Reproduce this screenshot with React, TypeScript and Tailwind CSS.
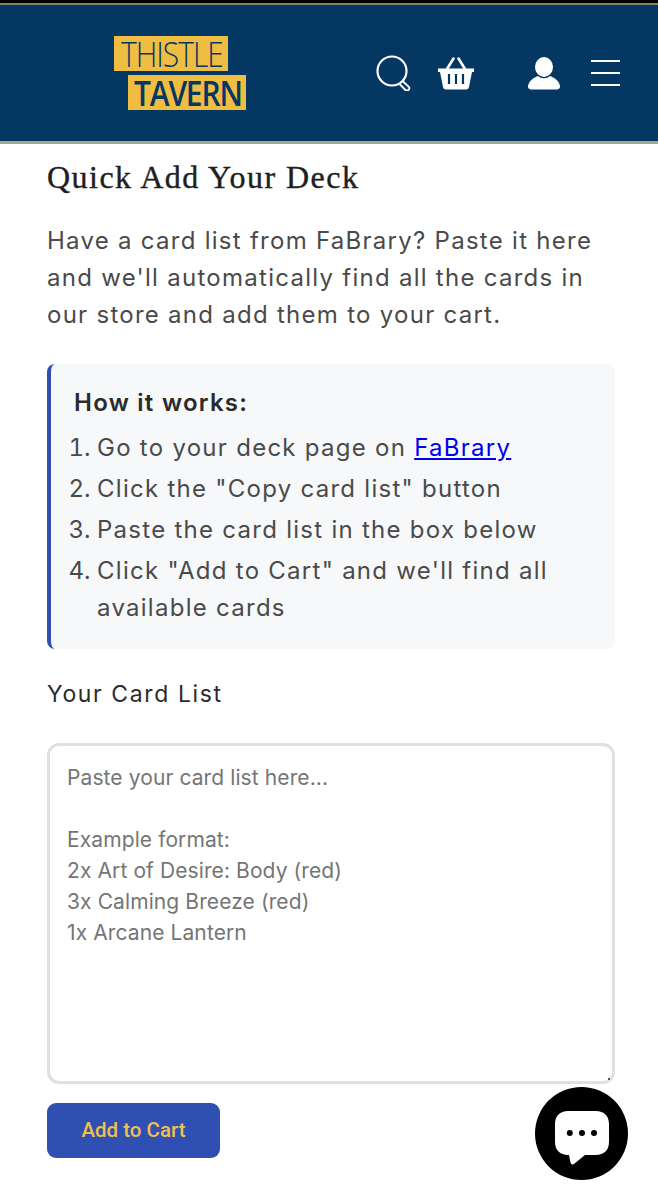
import React from 'react';

const body = { fontFamily: 'Inter, "Noto Sans", sans-serif' };

const steps = [
  <>Go to your deck page on <a href="#" className="text-[#0000ee] underline">FaBrary</a></>,
  <>Click the "Copy card list" button</>,
  <>Paste the card list in the box below</>,
  <>Click "Add to Cart" and we'll find all available cards</>,
];

const Header: React.FC = () => (
  <header className="bg-black pt-[3px]">
    <div className="h-[2px] bg-[#7d8460]"></div>
    <div className="h-[136px] bg-[#053763] flex items-center pl-[114px] pr-[38px]">
      {/* Logo */}
      <div className="w-[133px] flex flex-col" style={{ fontFamily: '"Open Sans", sans-serif' }}>
        <div className="w-[114px] h-[35px] flex items-center bg-[#f0bd43] text-[#053763] text-[30px] font-light pl-[7px] tracking-[-1px]">
          <span className="block leading-[28px] scale-y-[1.14]">THISTLE</span>
        </div>
        <div className="w-[118px] h-[35px] flex items-center ml-[14px] mt-[4px] bg-[#f0bd43] text-[#053763] text-[30px] font-semibold pl-[6px] tracking-[-1.2px]">
          <span className="block leading-[28px] scale-y-[1.14]">TAVERN</span>
        </div>
      </div>

      <div className="ml-auto flex items-center">
        {/* Search */}
        <svg width="36" height="36" viewBox="0 0 36 36" fill="none" stroke="white" className="mr-[26px]">
          <circle cx="16" cy="16" r="14.500" strokeWidth="2.200" />
          <path d="M27 26.500l6 5.500a2.400 2.400 0 0 1-3.600 3l-5.200-5.400" strokeWidth="2" strokeLinecap="round" />
        </svg>
        {/* Basket */}
        <svg width="36" height="34" viewBox="0 0 36 34" fill="white" className="mr-[54px]">
          <path d="M9 13L15.500 2.500M27 13L20.500 2.500" stroke="white" strokeWidth="2.600" strokeLinecap="round" fill="none" />
          <path d="M0 12.500h36v3.500h-2l-3 15a3 3 0 0 1-3 2.500H8a3 3 0 0 1-3-2.500L2 16H0z" />
          <path d="M11 18v10M18 18v10M25 18v10" stroke="#053763" strokeWidth="2.200" />
        </svg>
        {/* Account */}
        <svg width="32" height="33" viewBox="0 0 32 33" fill="white" className="mr-[31px]">
          <ellipse cx="16" cy="10" rx="9" ry="10" />
          <path d="M0 29c1-6 7-9 10-10 3 3 9 3 12 0 3 1 9 4 10 10 .3 2-1 3.500-3 3.500H3c-2 0-3.300-1.500-3-3.500z" />
        </svg>
        {/* Menu */}
        <div className="w-[29px] flex flex-col gap-[10px]">
          <div className="h-[2px] bg-white"></div>
          <div className="h-[2px] bg-white"></div>
          <div className="h-[2px] bg-white"></div>
        </div>
      </div>
    </div>
    <div className="h-[3px] bg-[#a3a98a]"></div>
  </header>
);

const App: React.FC = () => {
  return (
    <div className="relative min-h-[1200px] bg-white overflow-hidden">
      <Header />
      <main className="pl-[47px] pr-[43px] text-[#4a4a4a]" style={body}>
        <h1 className="mt-[13px] text-[32px] leading-[40px] tracking-[1.47px] text-[#1f1f1f] font-medium [-webkit-text-stroke:0.4px_#1f1f1f]" style={{ fontFamily: '"Liberation Serif", serif' }}>
          Quick Add Your Deck
        </h1>
        <p className="mt-[25px] text-[24px] leading-[37px] tracking-[1.27px]">
          Have a card list from FaBrary? Paste it here and we'll automatically find all the cards in our store and add them to your cart.
        </p>

        {/* How it works */}
        <section className="mt-[31px] h-[285px] bg-[#f7f8fa] border-l-[4px] border-[#304fb3] rounded-[8px] pl-[23px] pr-[20px] pt-[20px]">
          <h3 className="text-[24px] leading-[37px] tracking-[1.25px] font-semibold text-[#2b2b2b]">How it works:</h3>
          <ol className="mt-[8px] list-decimal pl-[23px] flex flex-col gap-[4px] text-[24px] leading-[37px] tracking-[1.27px] marker:tracking-normal">
            {steps.map((step, i) => (
              <li key={i}>{step}</li>
            ))}
          </ol>
        </section>

        <label className="block mt-[27px] text-[23px] leading-[37px] tracking-[1.6px] text-[#2b2b2b]">Your Card List</label>

        <div className="relative mt-[30px]">
          <textarea
            className="block w-full h-[341px] resize-none border-[3px] border-[#e0e0e0] rounded-[12px] px-[17px] pt-[16px] pb-[16px] text-[21px] leading-[31px] tracking-[0.1px] outline-none placeholder:text-[#757575]"
            placeholder={"Paste your card list here...\n\nExample format:\n2x Art of Desire: Body (red)\n3x Calming Breeze (red)\n1x Arcane Lantern"}
          />
          {/* resize grip */}
          <div className="absolute right-[5px] bottom-[4px] w-[2px] h-[2px] bg-[#555555]"></div>
        </div>

        <button className="mt-[19px] w-[173px] h-[55px] bg-[#304fb3] rounded-[9px] text-[#efc14c] text-[20.5px] font-medium" style={{ fontFamily: 'Roboto, sans-serif' }}>
          Add to Cart
        </button>
      </main>

      {/* Chat launcher */}
      <div className="absolute left-[535px] top-[1087px] w-[93px] h-[93px] rounded-full bg-black flex items-center justify-center">
        <svg width="54" height="54" viewBox="0 0 54 54" className="mt-[9px]">
          <path d="M13 0h28c8 0 13 5 13 13v18c0 8-5 13-13 13H30L19 53c-1.500 1-3 .5-3.500-1.500L14 44h-1C5 44 0 39 0 31V13C0 5 5 0 13 0z" fill="white" />
          <circle cx="14.800" cy="22" r="3" fill="black" />
          <circle cx="27" cy="22" r="3" fill="black" />
          <circle cx="39" cy="22" r="3" fill="black" />
        </svg>
      </div>
    </div>
  );
};

export default App;
